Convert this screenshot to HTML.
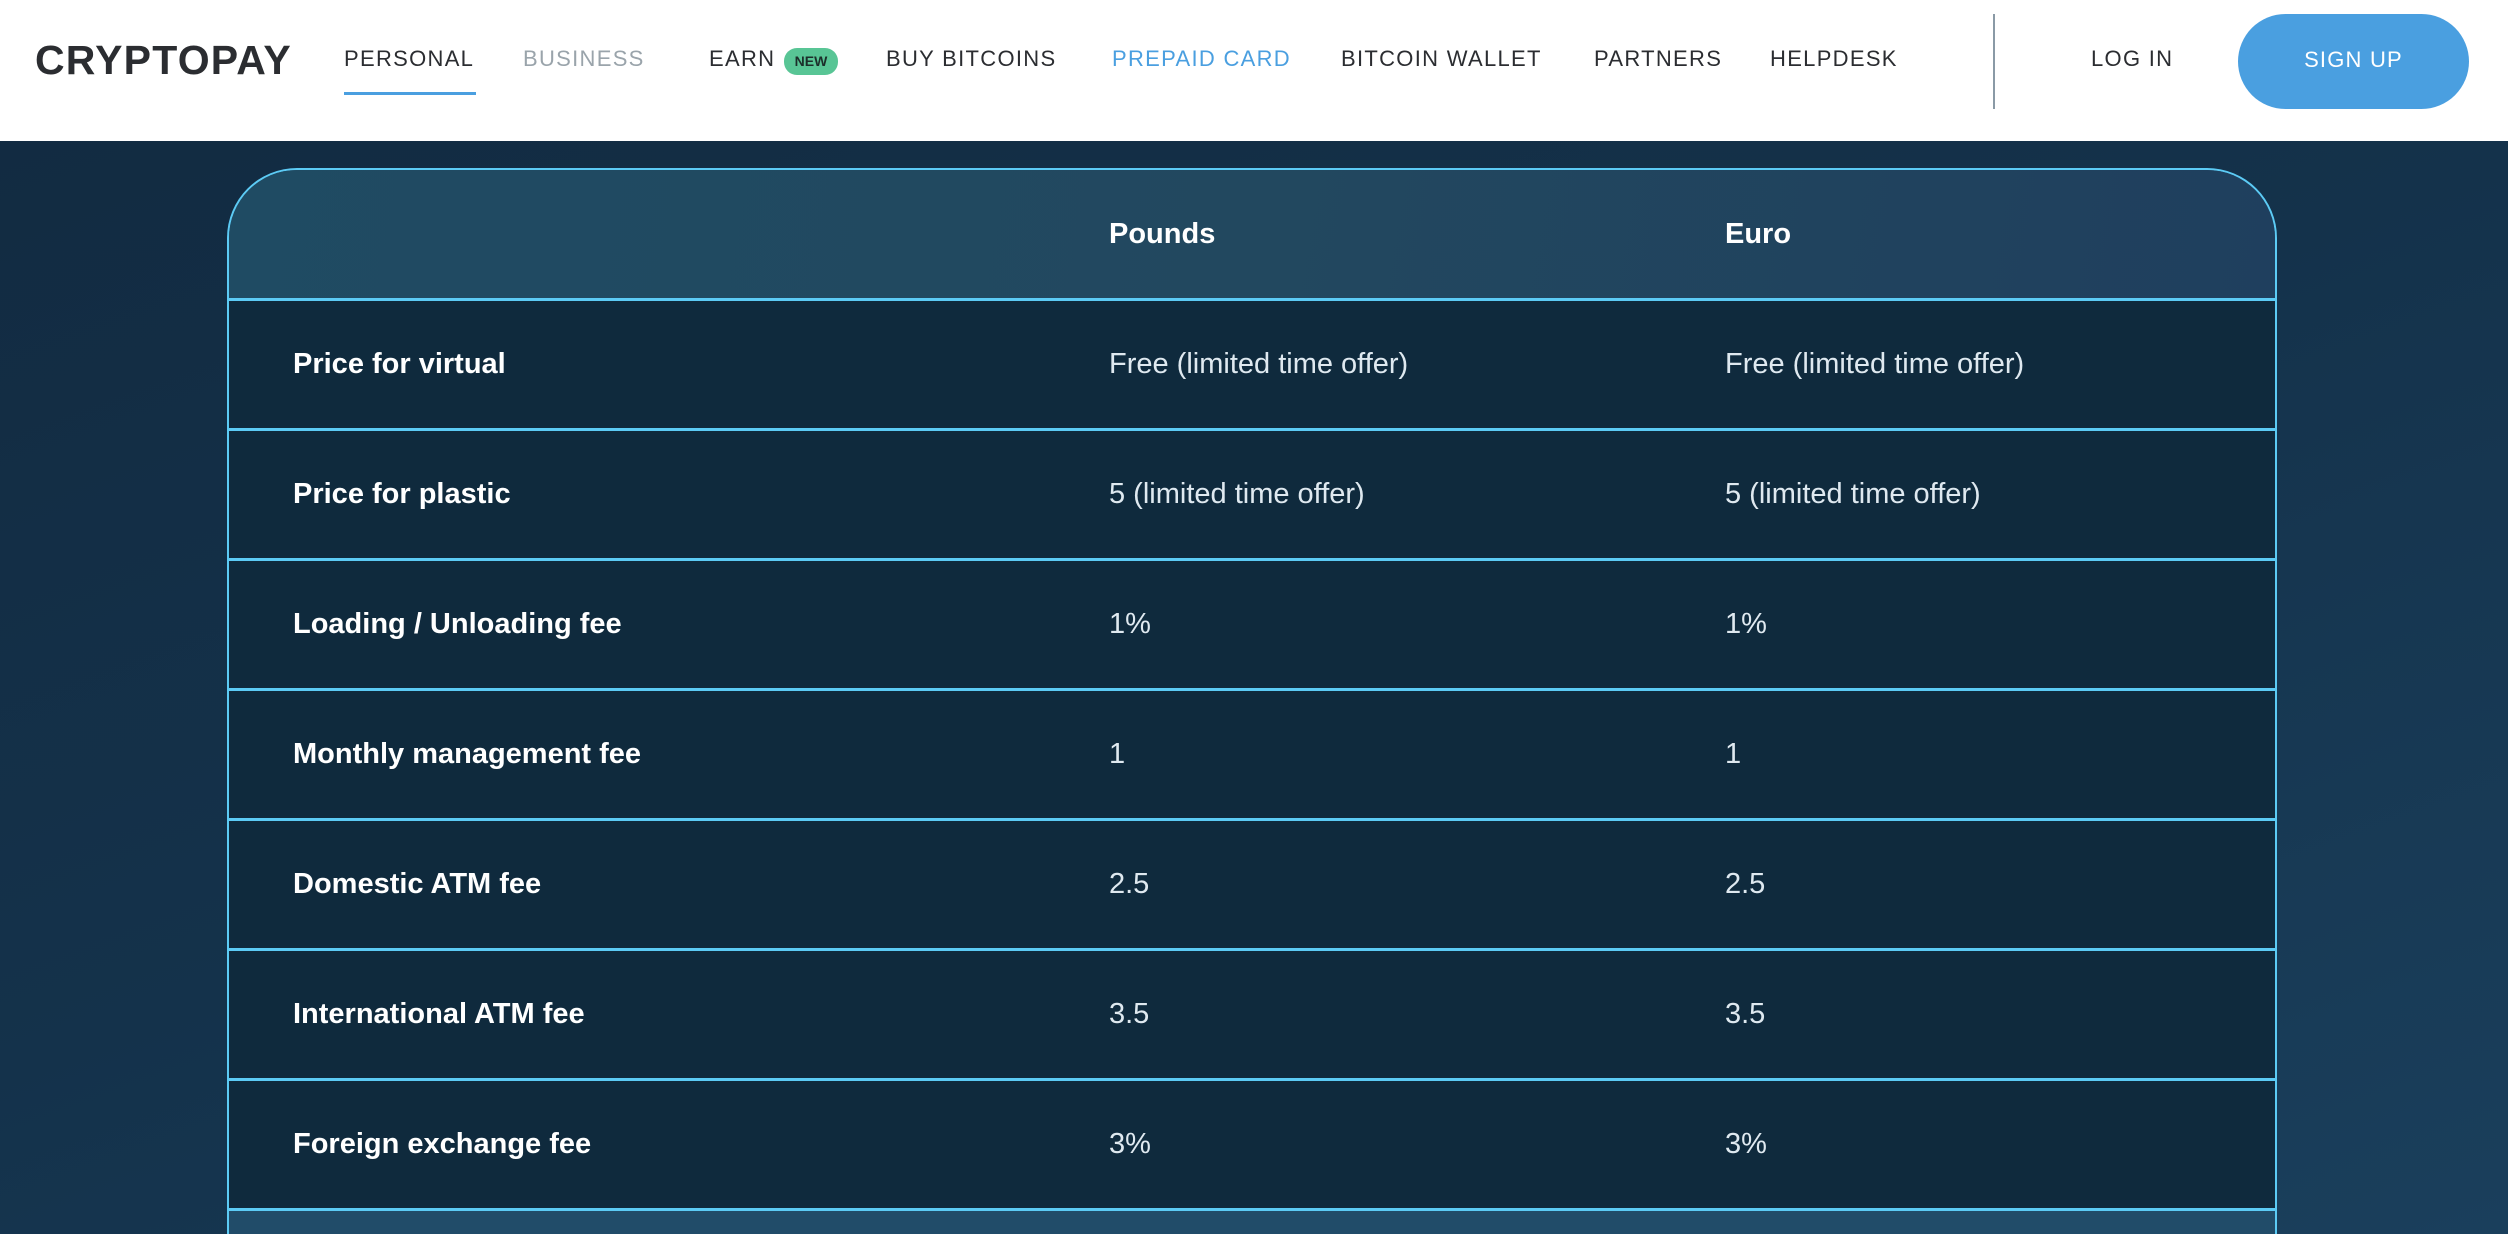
<!DOCTYPE html>
<html><head><meta charset="utf-8"><style>
*{margin:0;padding:0;box-sizing:border-box}
html{width:2508px;height:1234px;overflow:hidden;background:#14324b}
body{width:2508px;height:1234px;overflow:hidden;font-family:"Liberation Sans",sans-serif;background:linear-gradient(160deg,#122a40 0%,#14324b 50%,#1a3f5c 100%);position:relative}
.nav{position:absolute;left:0;top:0;width:2508px;height:141px;background:#fff}
.nav span{position:absolute;top:47px;font-size:22px;letter-spacing:1.3px;color:#2b2d31;white-space:nowrap;line-height:24px}
.logo{position:absolute;left:35px;top:37px;font-size:41px;font-weight:bold;color:#2b2d31;letter-spacing:1.2px;line-height:46px}
.badge{position:absolute;left:784px;top:48px;width:54px;height:27px;border-radius:13px;background:#58c595;color:#1c2e2a;font-size:14px;font-weight:bold;text-align:center;line-height:27px}
.ul{position:absolute;left:344px;top:92px;width:132px;height:3px;background:#4a9fe0}
.div{position:absolute;left:1993px;top:14px;width:2px;height:95px;background:#8a9aa6}
.btn{position:absolute;left:2238px;top:14px;width:231px;height:95px;border-radius:48px;background:#4a9fe0;color:#fff;font-size:22px;letter-spacing:1.2px;text-align:center;line-height:91px}
.tbl{position:absolute;left:227px;top:168px;width:2050px;height:1066px;border:2px solid #5ccbf5;border-bottom:none;border-top-left-radius:70px;border-top-right-radius:70px;overflow:hidden;background:#214c69}
.hd{height:131px;background:linear-gradient(100deg,#1f4b63,#22485f 50%,#1f3f5e);border-bottom:3px solid #5ccbf5;position:relative}
.row{height:130px;border-bottom:3px solid #5ccbf5;position:relative;background:#0f2a3d}
.c{position:absolute;top:0;line-height:127px;font-size:29px;color:#dfe9f0;white-space:nowrap}
.c1{left:64px;color:#fff;font-weight:bold}
.c2{left:880px}.c3{left:1496px}
.hd .c{font-weight:bold;color:#fff;line-height:128px}
</style></head><body>
<div class="nav">
<div class="logo">CRYPTOPAY</div>
<span style="left:344px">PERSONAL</span>
<span style="left:523px;color:#9aa4ab">BUSINESS</span>
<span style="left:709px">EARN</span><div class="badge">NEW</div>
<span style="left:886px">BUY BITCOINS</span>
<span style="left:1112px;color:#4a9fe0">PREPAID CARD</span>
<span style="left:1341px">BITCOIN WALLET</span>
<span style="left:1594px">PARTNERS</span>
<span style="left:1770px">HELPDESK</span>
<div class="ul"></div><div class="div"></div>
<span style="left:2091px">LOG IN</span>
<div class="btn">SIGN UP</div>
</div>
<div class="tbl">
<div class="hd"><div class="c c2">Pounds</div><div class="c c3">Euro</div></div>
<div class="row"><div class="c c1">Price for virtual</div><div class="c c2">Free (limited time offer)</div><div class="c c3">Free (limited time offer)</div></div>
<div class="row"><div class="c c1">Price for plastic</div><div class="c c2">5 (limited time offer)</div><div class="c c3">5 (limited time offer)</div></div>
<div class="row"><div class="c c1">Loading / Unloading fee</div><div class="c c2">1%</div><div class="c c3">1%</div></div>
<div class="row"><div class="c c1">Monthly management fee</div><div class="c c2">1</div><div class="c c3">1</div></div>
<div class="row"><div class="c c1">Domestic ATM fee</div><div class="c c2">2.5</div><div class="c c3">2.5</div></div>
<div class="row"><div class="c c1">International ATM fee</div><div class="c c2">3.5</div><div class="c c3">3.5</div></div>
<div class="row"><div class="c c1">Foreign exchange fee</div><div class="c c2">3%</div><div class="c c3">3%</div></div>
</div>
</body></html>
